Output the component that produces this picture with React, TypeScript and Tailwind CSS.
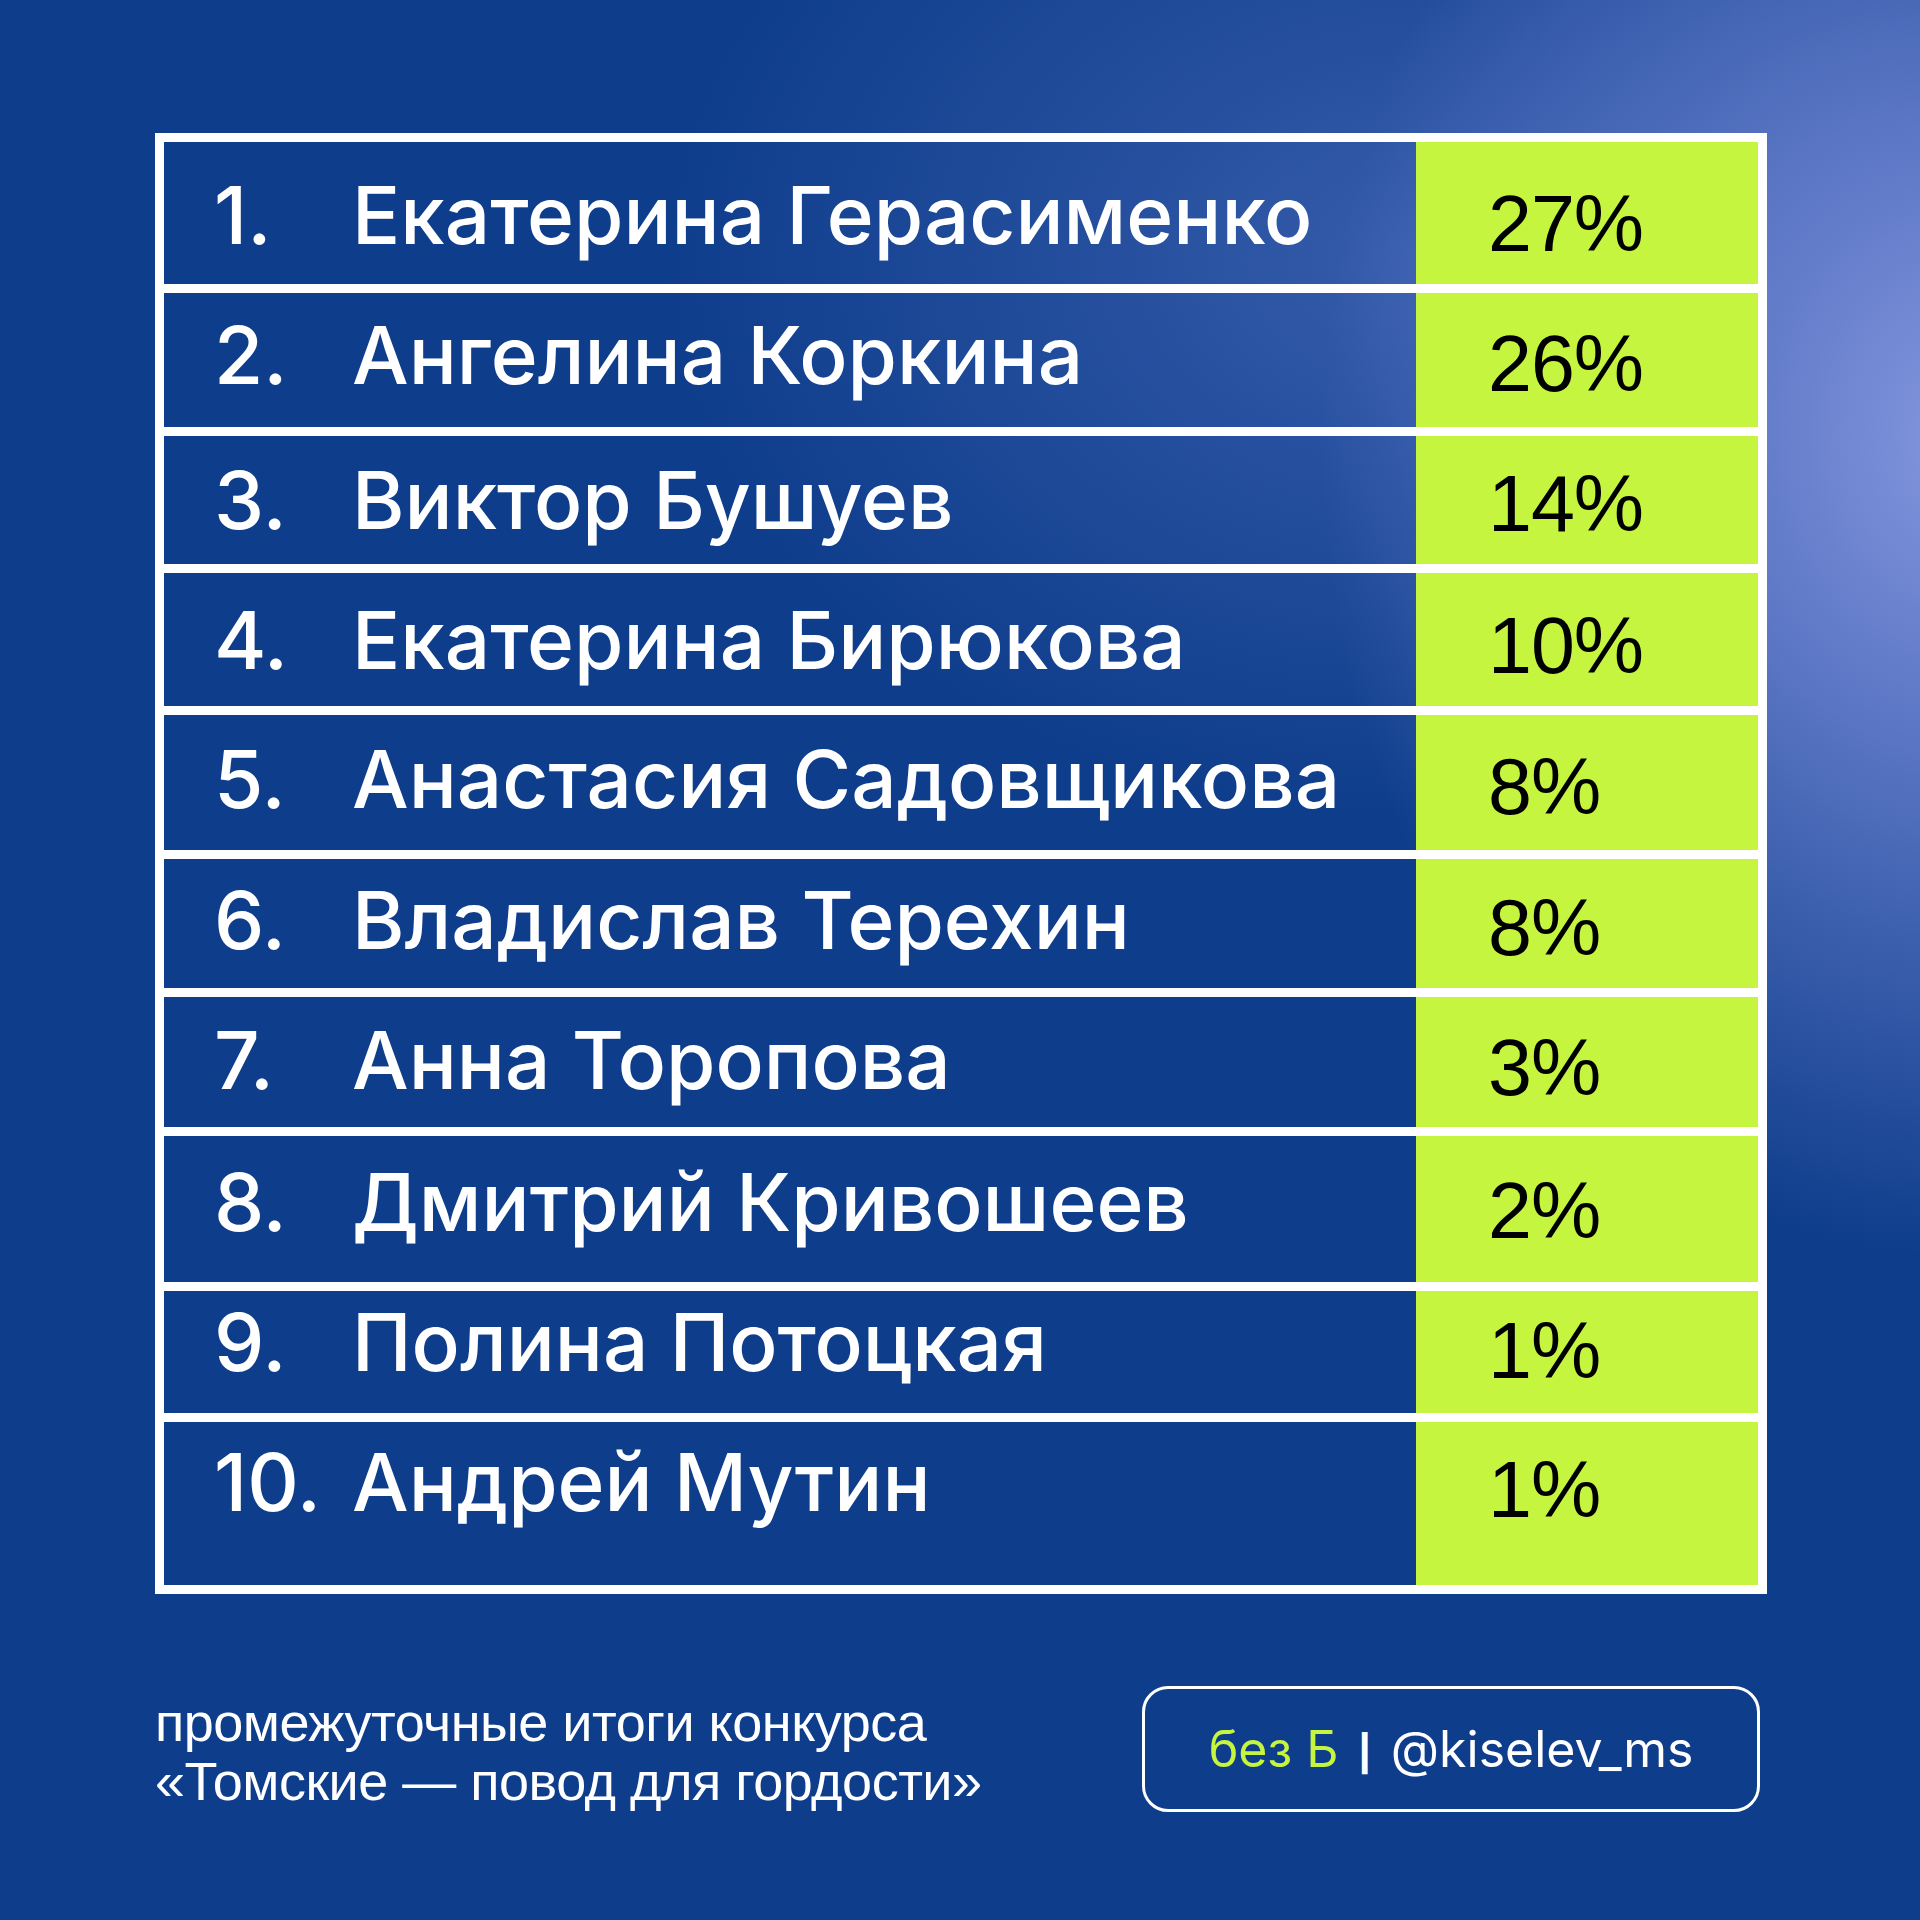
import React from "react";

const rows = [
  { n: "1.", name: "Екатерина Герасименко", p: "27%", h: "h-[151px]", ny: "translate-y-[2px]", py: "translate-y-[10px]" },
  { n: "2.", name: "Ангелина Коркина", p: "26%", h: "h-[143px]", ny: "-translate-y-[5px]", py: "translate-y-[3px]" },
  { n: "3.", name: "Виктор Бушуев", p: "14%", h: "h-[137px]", ny: "translate-y-[0px]", py: "translate-y-[3px]" },
  { n: "4.", name: "Екатерина Бирюкова", p: "10%", h: "h-[142px]", ny: "translate-y-[0px]", py: "translate-y-[6px]" },
  { n: "5.", name: "Анастасия Садовщикова", p: "8%", h: "h-[144px]", ny: "-translate-y-[4px]", py: "translate-y-[4px]" },
  { n: "6.", name: "Владислав Терехин", p: "8%", h: "h-[138px]", ny: "-translate-y-[4px]", py: "translate-y-[4px]" },
  { n: "7.", name: "Анна Торопова", p: "3%", h: "h-[139px]", ny: "-translate-y-[2px]", py: "translate-y-[5px]" },
  { n: "8.", name: "Дмитрий Кривошеев", p: "2%", h: "h-[155px]", ny: "-translate-y-[7px]", py: "translate-y-[1px]" },
  { n: "9.", name: "Полина Потоцкая", p: "1%", h: "h-[131px]", ny: "-translate-y-[10px]", py: "-translate-y-[2px]" },
  { n: "10.", name: "Андрей Мутин", p: "1%", h: "h-[163px]", ny: "-translate-y-[22px]", py: "-translate-y-[14px]" },
];

export default function App() {
  return (
    <div className="w-[1920px] h-[1920px] overflow-hidden bg-[#0e3d8b] bg-[image:radial-gradient(ellipse_640px_820px_at_1960px_440px,rgba(132,150,222,1)_0%,rgba(112,134,212,0.8)_35%,rgba(14,61,139,0)_100%),radial-gradient(ellipse_760px_560px_at_1420px_260px,rgba(86,118,198,0.55)_0%,rgba(14,61,139,0)_100%)] pt-[133px] pl-[155px] font-['Inter',sans-serif]">
      <div className="w-[1612px] border-[9px] border-white flex flex-col divide-y-[9px] divide-white">
        {rows.map((r, i) => (
          <div key={i} className={`flex ${r.h}`}>
            <div className={`flex-1 flex items-center text-white text-[80px] leading-none font-medium ${r.ny}`}>
              <span className="w-[188px] pl-[50px] shrink-0">{r.n}</span>
              <span className="whitespace-nowrap">{r.name}</span>
            </div>
            <div className="w-[342px] shrink-0 bg-[#c6f540] flex items-center pl-[72px] text-black text-[79px] leading-none tracking-[-1px] font-['Liberation_Sans',Arial,sans-serif]">
              <span className={r.py}>{r.p}</span>
            </div>
          </div>
        ))}
      </div>
      <div className="mt-[92px] w-[1605px] flex items-center justify-between">
        <div className="text-white text-[54px] leading-[59px] tracking-[-0.5px] font-['Liberation_Sans',Arial,sans-serif] pt-[6px]">
          <div>промежуточные итоги конкурса</div>
          <div>«Томские — повод для гордости»</div>
        </div>
        <div className="w-[618px] h-[126px] border-[3px] border-white rounded-[26px] flex items-center justify-center text-[50px] leading-none">
          <span className="text-[#c6f540]">без Б</span>
          <span className="text-white mx-[20px] text-[44px] font-bold font-['Liberation_Sans',Arial,sans-serif]">|</span>
          <span className="text-white">@kiselev_ms</span>
        </div>
      </div>
    </div>
  );
}
